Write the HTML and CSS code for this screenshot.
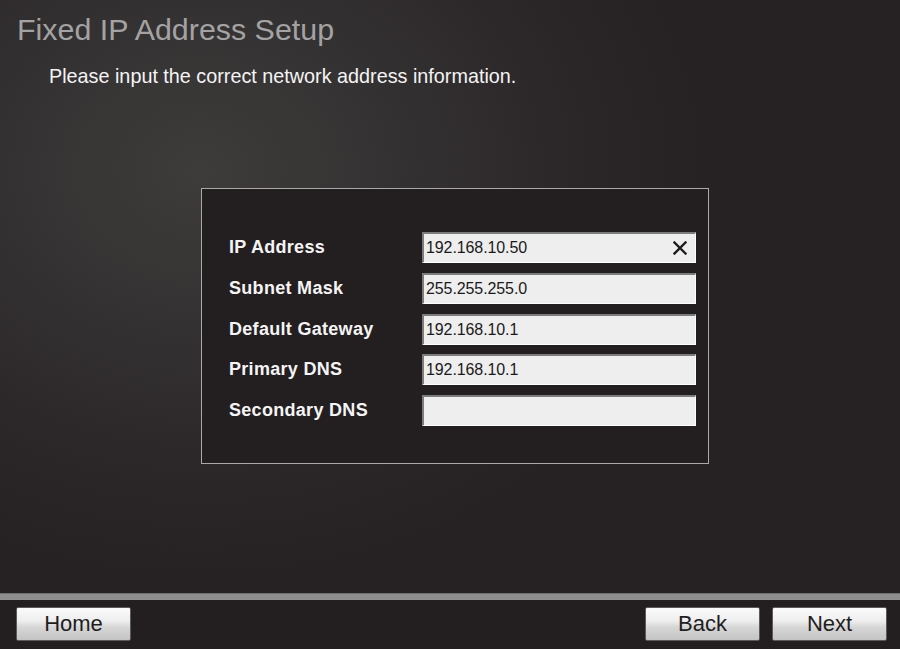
FILE: index.html
```html
<!DOCTYPE html>
<html lang="en">
<head>
<meta charset="utf-8">
<title>Fixed IP Address Setup</title>
<link rel="stylesheet" href="styles.css">
</head>
<body>
<div class="screen">
  <main class="content">
    <h1 class="title">Fixed IP Address Setup</h1>
    <p class="intro">Please input the correct network address information.</p>
    <div class="panel">
      <div class="form">
        <label class="label">IP Address</label>
        <div class="field"><span class="value">192.168.10.50</span>
          <svg class="clear" width="14" height="14" viewBox="0 0 14 14"><path d="M1.5 1.5 L12.5 12.5 M12.5 1.5 L1.5 12.5" stroke="#1e1e1e" stroke-width="2.4" stroke-linecap="square"/></svg>
        </div>
        <label class="label">Subnet Mask</label>
        <div class="field"><span class="value">255.255.255.0</span></div>
        <label class="label">Default Gateway</label>
        <div class="field"><span class="value">192.168.10.1</span></div>
        <label class="label">Primary DNS</label>
        <div class="field"><span class="value">192.168.10.1</span></div>
        <label class="label">Secondary DNS</label>
        <div class="field"><span class="value"></span></div>
      </div>
    </div>
  </main>
  <div class="bar"></div>
  <footer class="footer">
    <button class="btn">Home</button>
    <div class="nav">
      <button class="btn">Back</button>
      <button class="btn">Next</button>
    </div>
  </footer>
</div>
</body>
</html>
```
FILE: styles.css
```css
html, body {
  margin: 0;
  padding: 0;
  background: #231f20;
}
.screen {
  width: 900px;
  height: 649px;
  display: flex;
  flex-direction: column;
  font-family: "Liberation Sans", Arial, sans-serif;
  overflow: hidden;
}
.content {
  height: 593px;
  box-sizing: border-box;
  padding-top: 12px;
  background:
    radial-gradient(ellipse 520px 420px at 200px 170px, #3e3c3a 0%, #353233 35%, #2a2627 75%, #262223 100%);
}
.title {
  margin: 0 0 0 17px;
  font-size: 30.4px;
  line-height: 34px;
  font-weight: normal;
  color: #a3a3a3;
}
.intro {
  margin: 19px 0 0 49px;
  font-size: 19.8px;
  line-height: 23px;
  color: #f4f4f4;
}
.panel {
  margin: 100px 0 0 201px;
  width: 508px;
  height: 276px;
  box-sizing: border-box;
  border: 1px solid #a9a9a9;
  background: #231f20;
  padding: 43px 13px 0 26px;
}
.form {
  display: grid;
  grid-template-columns: 194px 274px;
  grid-auto-rows: 31px;
  row-gap: 9.75px;
  align-items: center;
}
.label {
  font-size: 18px;
  font-weight: bold;
  letter-spacing: 0.3px;
  color: #f4f4f4;
  padding-left: 1px;
}
.field {
  height: 31px;
  box-sizing: border-box;
  background: #eeeeee;
  border-top: 2px solid #7c7c7c;
  border-left: 2px solid #7c7c7c;
  border-right: 1px solid #ffffff;
  border-bottom: 1px solid #ffffff;
  display: flex;
  align-items: center;
  justify-content: space-between;
  padding: 0 8px 0 2px;
}
.value {
  font-size: 16px;
  color: #1a1a1a;
  letter-spacing: -0.1px;
}
.clear {
  display: block;
}
.bar {
  height: 7px;
  background: #8e8e8e;
  border-top: 1px solid #6e6e6e;
  box-sizing: border-box;
}
.footer {
  flex: 1;
  background: #231f20;
  display: flex;
  justify-content: space-between;
  align-items: flex-start;
  padding: 7px 13px 0 16px;
}
.nav {
  display: flex;
  gap: 12px;
}
.btn {
  width: 115px;
  height: 34px;
  box-sizing: border-box;
  border: 1px solid #5a5a5a;
  border-radius: 2px;
  background: linear-gradient(#fbfbfb 0%, #eeeeee 40%, #d6d6d6 60%, #c4c4c4 100%);
  font-family: "Liberation Sans", Arial, sans-serif;
  font-size: 22px;
  color: #1e1e1e;
  padding: 0;
  line-height: 32px;
}
```
